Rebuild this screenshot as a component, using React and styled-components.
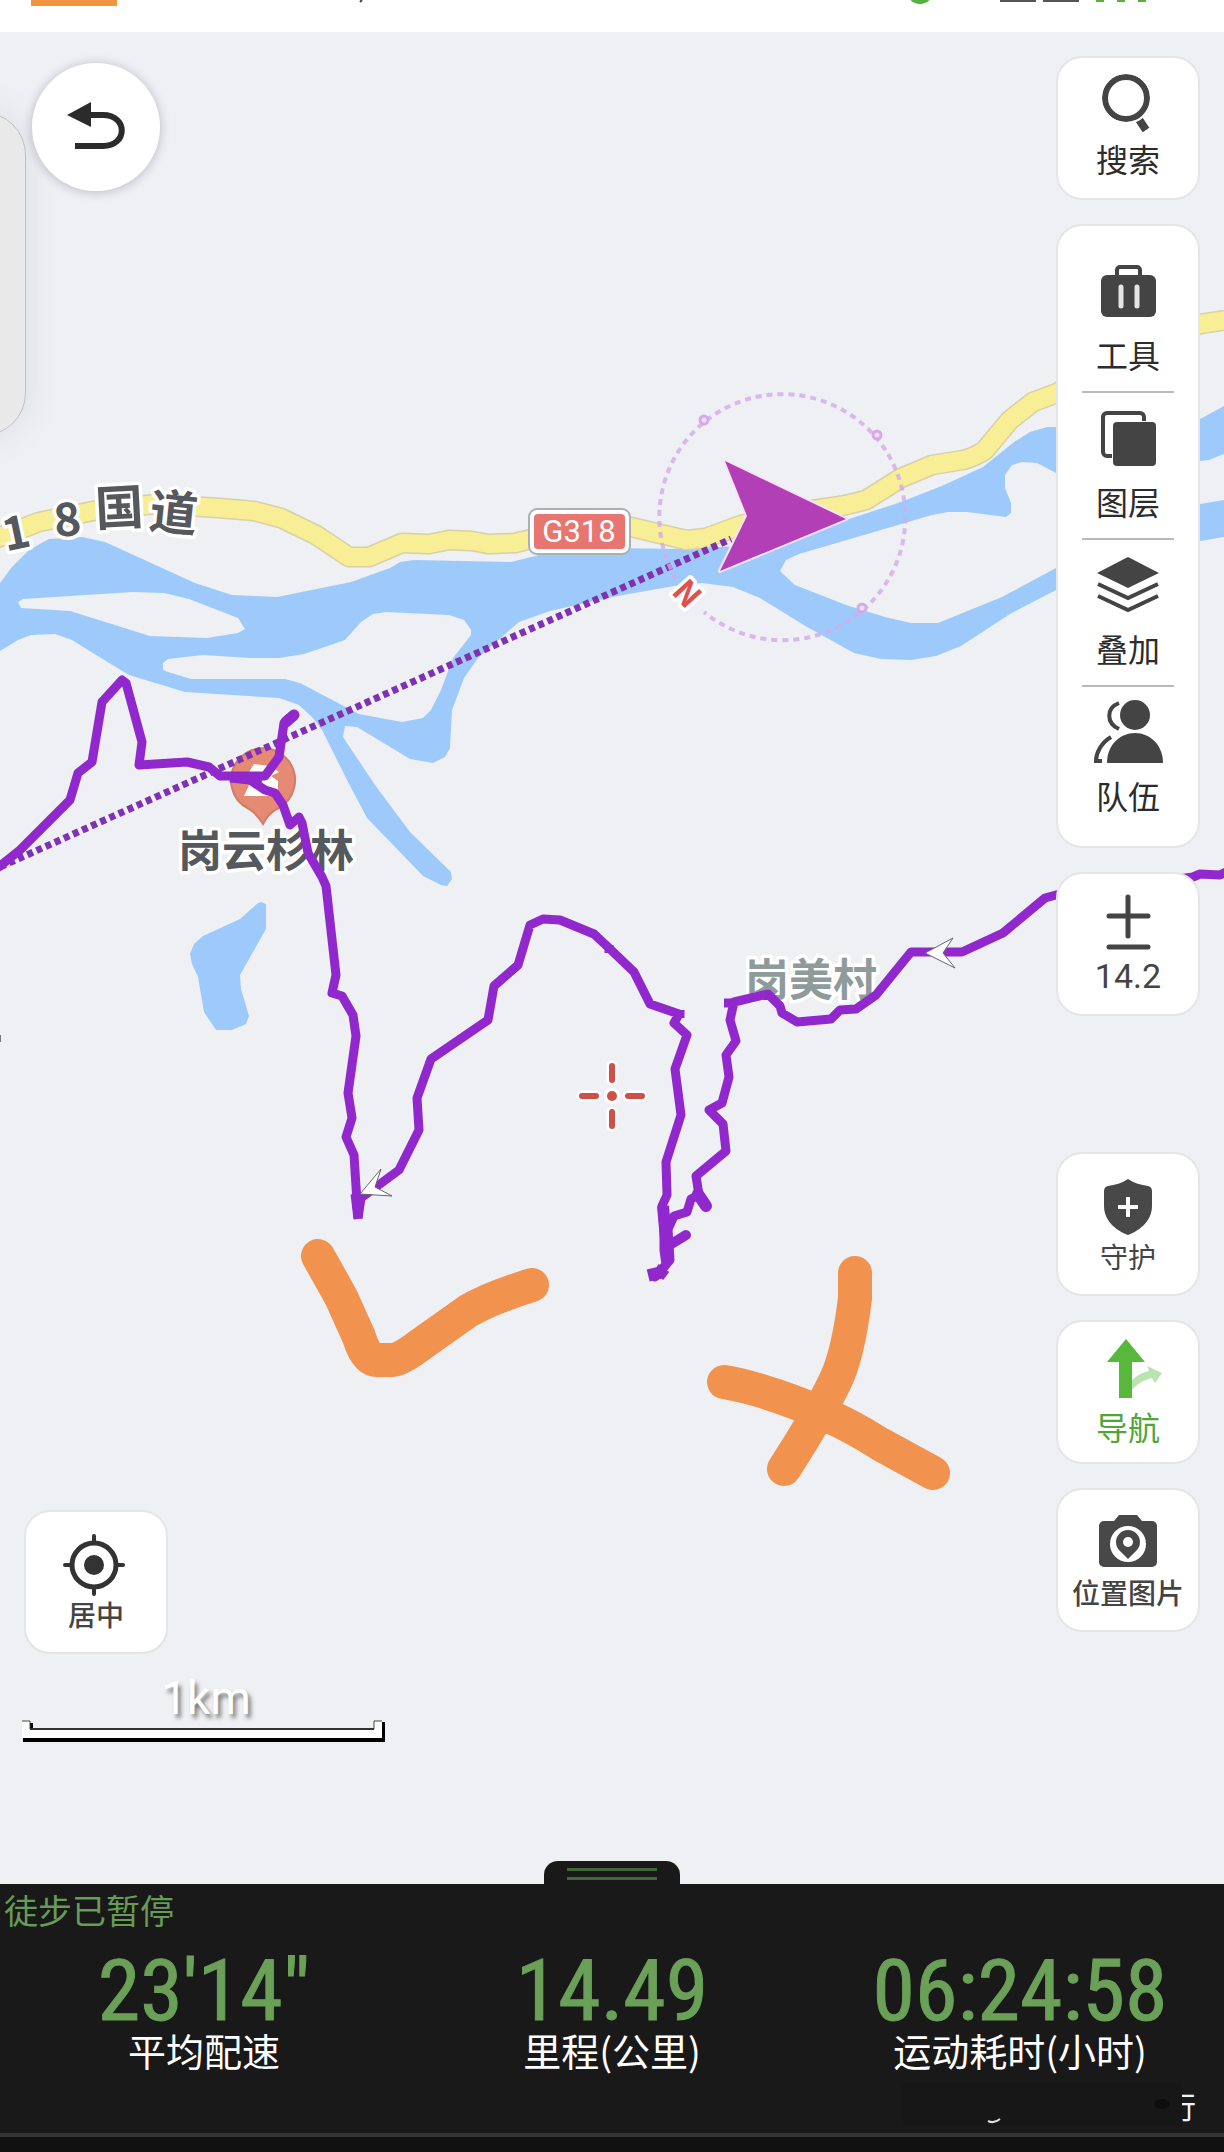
import React from 'react';
import styled, { createGlobalStyle } from 'styled-components';

const GlobalStyle = createGlobalStyle`
  *, *::before, *::after { box-sizing: border-box; }
  body {
    margin: 0;
    background: #eef0f4;
    font-family: "Noto Sans CJK SC", Roboto, sans-serif;
  }
  button { font: inherit; cursor: pointer; }
`;

const Page = styled.div`
  display: flex;
  flex-direction: column;
  min-height: 100vh;
  overflow: hidden;
`;

const StatusBar = styled.header`
  display: flex;
  justify-content: space-between;
  height: 32px;
  padding: 0 78px 0 31px;
  background: #fff;
`;

const StatusGroup = styled.div`
  display: flex;
  gap: 242px;
`;

const Tag = styled.span`
  width: 86px;
  height: 6px;
  background: #f0953f;
  border-bottom: 1px solid #c9a55a;
`;

const MapArea = styled.main`
  position: relative;
  display: flex;
  flex: 1;
  justify-content: space-between;
  padding: 24px 24px 0;
  background: #eef0f4;
`;

const MapCanvas = styled.svg`
  position: absolute;
  inset: 0;
  width: 100%;
  height: 100%;
  font-family: "Noto Sans CJK SC", sans-serif;
`;

const Drawer = styled.aside`
  position: absolute;
  left: -60px;
  top: 80px;
  width: 86px;
  height: 324px;
  border: 1px solid #bfc0c2;
  border-radius: 48px;
  background: #e9e9ea;
  box-shadow: 0 0 36px rgba(60, 60, 70, 0.1);
`;

const Column = styled.div`
  position: relative;
  display: flex;
  flex-direction: column;
  align-items: flex-start;
  gap: 24px;
`;

const LeftFoot = styled.div`
  display: flex;
  flex-direction: column;
  gap: 22px;
  margin-top: auto;
  padding-bottom: 140px;
`;

const RightFoot = styled.div`
  display: flex;
  flex-direction: column;
  gap: 24px;
  margin-top: 112px;
`;

const BackButton = styled.button`
  display: grid;
  place-items: center;
  width: 128px;
  height: 128px;
  margin: 7px 0 0 8px;
  padding: 0;
  border: 0;
  border-radius: 50%;
  background: #fff;
  box-shadow: 0 1px 8px 2px rgba(60, 50, 70, 0.2);
`;

const Card = styled.button`
  display: flex;
  flex-direction: column;
  align-items: center;
  width: 144px;
  height: 144px;
  padding: ${(p) => p.$top || 8}px 0 0;
  border: 2px solid #e5e5e7;
  border-radius: 26px;
  background: #fff;
`;

const ToolGroup = styled.nav`
  display: flex;
  flex-direction: column;
  align-items: center;
  width: 144px;
  padding: 20px 0 12px;
  border: 2px solid #e5e5e7;
  border-radius: 26px;
  background: #fff;
`;

const ToolItem = styled.button`
  display: flex;
  flex-direction: column;
  align-items: center;
  width: 92px;
  height: 147px;
  padding: 16px 0 0;
  border: 0;
  border-bottom: 2px solid #b9b9b9;
  background: none;
  &:last-child { border-bottom-color: transparent; }
`;

const Glyph = styled.svg`
  flex: none;
  width: 72px;
  height: 72px;
  overflow: visible;
`;

const Label = styled.span`
  color: ${(p) => p.$color || '#2c2c2c'};
  font-size: ${(p) => (p.$small ? 28 : 32)}px;
  font-weight: ${(p) => (p.$medium ? 500 : 400)};
  line-height: 40px;
  white-space: nowrap;
`;

const ZoomLevel = styled(Label)`
  font-family: Roboto, sans-serif;
  font-size: 34px;
  line-height: 44px;
`;

const Scale = styled.div`
  display: flex;
  flex-direction: column;
  align-items: center;
  width: 364px;
`;

const ScaleLabel = styled.span`
  color: #fff;
  font-family: Roboto, sans-serif;
  font-size: 46px;
  line-height: 44px;
  text-shadow: 3px 4px 4px #777;
`;

const Handle = styled.button`
  position: absolute;
  right: 0;
  bottom: 0;
  left: 0;
  display: flex;
  flex-direction: column;
  align-items: center;
  gap: 6px;
  width: 136px;
  height: 23px;
  margin: 0 auto;
  padding: 7px 0 0;
  border: 0;
  border-radius: 14px 14px 0 0;
  background: #191919;
`;

const Grip = styled.span`
  width: 90px;
  height: 3px;
  background: #41683a;
`;

const Panel = styled.section`
  display: flex;
  flex-direction: column;
  background: #191919;
`;

const PanelStatus = styled.p`
  margin: 0;
  padding: 6px 4px 0;
  color: #669c55;
  font-size: 34px;
  line-height: 40px;
`;

const Stats = styled.dl`
  display: grid;
  grid-template-columns: repeat(3, 1fr);
  margin: 21px 0 0;
`;

const Stat = styled.div`
  display: flex;
  flex-direction: column-reverse;
  align-items: center;
`;

const StatName = styled.dt`
  color: #fff;
  font-size: 38px;
  line-height: 38px;
`;

const StatValue = styled.dd`
  margin: 0;
  color: #6aa057;
  font-family: "Roboto Condensed", "Liberation Sans Narrow", Roboto, sans-serif;
  font-size: 86px;
  line-height: 80px;
  -webkit-text-stroke: 1px #6aa057;
`;

const Watermark = styled.div`
  display: flex;
  justify-content: flex-end;
  height: 64px;
  padding: 14px 28px 0 0;
`;

const WatermarkText = styled.span`
  display: flex;
  justify-content: flex-end;
  width: 14px;
  height: 44px;
  overflow: hidden;
  color: #f2f2f2;
  font-size: 30px;
  line-height: 44px;
`;

const BottomEdge = styled.footer`
  height: 19px;
  border-top: 4px solid #333;
  background: #111;
`;

const INK = '#444';
const TRACK = '#9128cd';

const SearchIcon = () => (
  <Glyph viewBox="0 0 72 72" fill="none" stroke={INK}>
    <circle cx="34" cy="32" r="21" strokeWidth="6" />
    <path d="M46 52l8 12" strokeWidth="8" />
    <circle cx="34" cy="32" r="25" stroke="#fff" strokeWidth="2" />
  </Glyph>
);

const ToolsIcon = () => (
  <Glyph viewBox="0 0 72 72" fill={INK}>
    <rect x="9" y="13" width="55" height="42" rx="6" />
    <path d="M25 14V8a3 3 0 0 1 3-3h17a3 3 0 0 1 3 3v6" fill="none" stroke={INK} strokeWidth="4" />
    <path d="M29 25v19M45 25v19" stroke="#e4e4e4" strokeWidth="5" strokeLinecap="round" />
  </Glyph>
);

const LayersIcon = () => (
  <Glyph viewBox="0 0 72 72" fill={INK}>
    <rect x="11" y="4" width="41" height="43" rx="4" fill="none" stroke={INK} strokeWidth="4" />
    <rect x="20" y="12" width="45" height="46" rx="5" fill="#fff" />
    <rect x="21" y="13" width="43" height="44" rx="4" />
  </Glyph>
);

const StackIcon = () => (
  <Glyph viewBox="0 0 72 72" fill={INK}>
    <path d="M36 1L67 17L36 32L5 17z" />
    <path d="M6 28l30 14L66 28M6 40l30 14L66 40" fill="none" stroke={INK} strokeWidth="4" />
  </Glyph>
);

const TeamIcon = () => (
  <Glyph viewBox="0 0 72 72" fill={INK}>
    <circle cx="43" cy="12" r="15" />
    <path d="M15 60C15 42 28 30 43 30s28 12 28 30z" />
    <path d="M27 0C14 5 14 20 27 26M19 34C9 40 4 50 4 58h6" fill="none" stroke={INK} strokeWidth="4" />
  </Glyph>
);

const PlusMinusIcon = () => (
  <Glyph viewBox="0 0 72 72" fill="none" stroke={INK} strokeWidth="5" strokeLinecap="round">
    <path d="M17 34h39M36 15v39M17 65h39" />
  </Glyph>
);

const ShieldIcon = () => (
  <Glyph viewBox="0 0 72 72" fill="#484848">
    <path d="M36 15C42 19 49 21 56 22c3 .5 4 3 4 5v15c0 14-11 24-24 29C23 66 12 56 12 42V27c0-3 2-4.500 4-5 7-1 14-3 20-7z" />
    <path d="M26 43h20M36 33v20" stroke="#fff" strokeWidth="4" />
  </Glyph>
);

const NavigateIcon = () => (
  <Glyph viewBox="0 0 72 72" fill="#57b83b">
    <path d="M34 5l19 23H40v36H27V28H15z" />
    <path d="M40 46c5-5 11-8 17-9l-2-5 15 7-7 10-3-5c-8 2-15 6-20 12z" fill="#b9e4b0" />
  </Glyph>
);

const CameraIcon = () => (
  <Glyph viewBox="0 0 72 72" fill="#484848">
    <path d="M12 21h10l5-6h18l5 6h10a5 5 0 0 1 5 5v36a5 5 0 0 1-5 5H12a5 5 0 0 1-5-5V26a5 5 0 0 1 5-5z" />
    <circle cx="36" cy="44" r="18" fill="#fff" />
    <path d="M36 59l-8-8a12 12 0 1 1 16 0z" />
    <circle cx="36" cy="42" r="5" fill="#fff" />
  </Glyph>
);

const CenterIcon = () => (
  <Glyph viewBox="0 0 72 72" fill="none" stroke="#333" strokeWidth="5" strokeLinecap="round">
    <circle cx="34" cy="43" r="22" />
    <circle cx="34" cy="43" r="10" fill="#333" stroke="none" />
    <path d="M34 14v6M34 66v6M5 43h6M57 43h6" strokeWidth="4" />
  </Glyph>
);

const BackIcon = () => (
  <svg width="64" height="56" viewBox="0 0 64 56">
    <path d="M26 16h13c25 0 25 31 0 31H11" fill="none" stroke="#2b2b2b" strokeWidth="6" />
    <path d="M3 16L27 3v25z" fill="#2b2b2b" />
  </svg>
);

const StatusIcons = () => (
  <svg width="240" height="12" viewBox="0 0 240 12" aria-hidden="true">
    <circle cx="14" cy="-9" r="11" fill="none" stroke="#55b13c" strokeWidth="4" />
    <path d="M94 1h36M137 1h36" stroke="#555" strokeWidth="2" />
    <path d="M190 1h8M211 1h8M232 1h8" stroke="#55b13c" strokeWidth="2" />
  </svg>
);

const ScaleRule = () => (
  <svg width="368" height="24" viewBox="0 0 368 24" aria-hidden="true">
    <path d="M1 3h10v7h341V2h11v20H1z" fill="#000" />
    <path d="M0 1h8v9h344V1h8v17H0z" fill="#fff" />
    <path d="M0 1h8v8h344V1h8" fill="none" stroke="#444" strokeWidth="1" />
    <path d="M9 9h343" stroke="#333" strokeWidth="2" />
  </svg>
);

const ROAD =
  'M-10 540L0 537L39 522L98 510L156 504L219 508L254 511L281 518L316 535L349 557L369 557L402 543L429 544L449 540L472 541L488 544L515 543L539 537L631 527L686 540L706 538L741 525L800 512L846 505L866 500L901 478L932 465L963 460Q975 457 985 450L1010 420L1033 402L1057 393L1130 350L1200 324L1234 319';

const RIVER =
  'M0 583L12 567L29 550L49 539L82 537L105 542L195 583L232 595L277 597L351 582L390 568L400 562L414 560L511 562L539 555L612 548L682 549L760 545L846 520L901 502L944 485L983 467L1014 442L1030 432L1047 427L1057 427L1130 440L1200 419L1224 406V454L1209 460L1200 461L1130 490L1056 473L1037 463L1022 462L1012 465L1005 475V488L1011 503V513L1006 517L967 512L948 512L932 515L799 554L786 560L780 571L795 585L846 605L885 617L911 623L938 623L1002 597L1056 568L1130 520L1200 504L1224 500V537L1200 541L1130 555L1056 590L1010 614L961 646L936 656L911 660L881 659L854 653L807 627L760 598L733 587L702 583L674 586L612 597L550 611L519 622L504 635L478 658L464 678L452 710L450 748L445 757L433 763L410 759L357 727L345 726L343 737L375 785L410 832L451 872L452 879L447 886L441 885L423 876L398 850L367 818L347 780L322 730L312 717L299 705L279 698L185 692L129 675L101 658L72 640L55 634L31 635L18 640L0 651Z' +
  'M18 602L23 599L133 592L164 593L189 599L238 618L245 629L238 633L207 638L150 636L70 611L21 608Z' +
  'M163 663L168 659L203 655L250 658L279 658L304 654L345 640L361 622L373 614L386 612L449 615L464 620L471 630L471 635L453 658L441 690L431 710L423 718L402 722L359 714L300 683L285 679L191 679L168 672L163 670Z';

const LAKE =
  'M258 903L261 902L266 904V929L240 975L241 989L249 1016L246 1024L232 1030H216L204 1012L198 977L192 964L190 954L194 944L203 936L240 919Z';

const TRACKS = [
  'M-6 870L0 866L20 850L70 800L78 773L92 762L102 702L122 680L126 683L142 742L139 765L187 762L209 767L220 776L265 776L279 757L284 723L288 719L293 716',
  'M230 778L250 780L265 790L275 793L283 805L290 825L299 817L302 823L308 853L322 877L326 886L336 975L332 993L342 996L353 1015L356 1036L348 1093L352 1118L346 1137L354 1155L358 1218',
  'M358 1218L361 1198L399 1170L419 1130L417 1098L431 1059L488 1020L494 986L518 965L530 925L543 919L560 920L594 934L609 948L634 972L650 1004L679 1014L674 1023L687 1035L675 1069L681 1115L666 1162L667 1195L662 1206L664 1229L664 1250L666 1265L655 1277L670 1260L668 1229L674 1216L687 1212L691 1199L699 1195L696 1176L726 1151L723 1124L709 1110L722 1103L729 1077L726 1055L736 1041L730 1020L734 1002L768 994L780 1006L782 1013L797 1022L831 1019L840 1010L856 1009L876 995L911 952L962 952L1003 933L1045 898L1056 895L1193 877L1200 874L1220 875L1230 870',
];

const Halo = styled.text`
  fill: ${(p) => p.$color || '#55585c'};
  stroke: #fff;
  stroke-width: 7px;
  stroke-linejoin: round;
  paint-order: stroke;
  font-size: ${(p) => p.$size || 44}px;
  font-weight: 700;
  text-anchor: middle;
  dominant-baseline: central;
`;

const MapDrawing = () => (
  <MapCanvas viewBox="0 32 1224 1852" preserveAspectRatio="xMidYMid slice" role="img" aria-label="地图">
    <path d={RIVER} fill="#9ecafb" fillRule="evenodd" />
    <path d={LAKE} fill="#9ecafb" />
    <g fill="none" strokeLinejoin="round">
      <path d={ROAD} stroke="#d8d0a6" strokeWidth="21" />
      <path d={ROAD} stroke="#f8ee96" strokeWidth="18" />
    </g>

    <Halo $size={46} transform="translate(15 529) rotate(-12)">1</Halo>
    <Halo $size={46} transform="translate(67 516) rotate(-6)">8</Halo>
    <Halo $size={48} transform="translate(119 504) rotate(-3)">国</Halo>
    <Halo $size={48} transform="translate(174 509) rotate(6)">道</Halo>

    <rect x="529" y="509" width="101" height="45" rx="8" fill="#fff" stroke="#aab0b4" strokeWidth="2" />
    <rect x="534" y="514" width="91" height="35" rx="4" fill="#e77671" />
    <text x="579" y="542" fill="#fff" fontSize="31" fontFamily="Roboto, sans-serif" textAnchor="middle">G318</text>

    <path d="M263 824Q257 814 249 809A32 32 0 1 1 277 809Q268 814 263 824z" fill="#e58b74" stroke="#cf7c68" strokeWidth="2" />
    <path d="M254 764l16 2 9 6-8 4 7 5v15h-34l6-13-4-6z" fill="#fff" />
    <Halo x="266" y="848">岗云杉林</Halo>
    <Halo x="811" y="977" $color="#8f9b9b">岗美村</Halo>
    <path d="M0 1035v7" stroke="#777" strokeWidth="2" />

    <path d="M0 867L731 539" stroke="#8031b3" strokeWidth="7" strokeDasharray="6 4" />
    <g fill="none" stroke={TRACK} strokeWidth="9" strokeLinejoin="round">
      {TRACKS.map((d) => <path key={d} d={d} />)}
      <path d="M286 722L294 715" strokeLinecap="round" strokeWidth="11" />
      <path d="M232 777L262 778M724 1003h12M609 945v8M680 1010v8" />
      <path d="M698 1194L706 1206" strokeWidth="12" strokeLinecap="round" />
      <path d="M663 1206L668 1262" strokeWidth="12" />
      <path d="M668 1246L686 1235" strokeWidth="10" strokeLinecap="round" />
      <path d="M653 1268l3 12M658 1276l6 -8" strokeWidth="13" />
      <path d="M355 1194l3 25" />
    </g>
    <g fill="#fff" stroke="#666" strokeWidth="1">
      <path d="M925 953L953 938L943 953L955 968z" />
      <path d="M360 1194L381 1169L375 1187L392 1196z" />
    </g>

    <g fill="none" stroke="#d5a9ea">
      <path d="M676 579A123 123 0 1 1 704 612" strokeWidth="4" strokeDasharray="6 5" opacity="0.8" />
      <g strokeWidth="3" fill="#eedcf7">
        <circle cx="704" cy="420" r="4" />
        <circle cx="877" cy="435" r="4" />
        <circle cx="862" cy="608" r="4" />
      </g>
    </g>
    <Halo $size={32} $color="#e0504f" transform="translate(689 592) rotate(48)">N</Halo>
    <path d="M725 461L846 519L720 571L747 516z" fill="#b33fb7" stroke="#f9e3f8" strokeWidth="4" strokeLinejoin="round" paintOrder="stroke" />

    <g strokeLinecap="round" fill="none">
      <path d="M582 1096h14M628 1096h14M612 1066v14M612 1112v14" stroke="#fff" strokeWidth="11" />
      <circle cx="612" cy="1096" r="8" fill="#fff" />
      <path d="M582 1096h14M628 1096h14M612 1066v14M612 1112v14" stroke="#cf5048" strokeWidth="6" />
      <circle cx="612" cy="1096" r="5" fill="#cf5048" />
    </g>

    <g fill="none" stroke="#f1924e" strokeWidth="34" strokeLinecap="round" strokeLinejoin="round">
      <path d="M318 1256L341 1297L359 1337Q366 1360 377 1360H393Q400 1360 420 1345L468 1311Q490 1298 532 1285" />
      <path d="M855 1273V1298Q850 1340 841 1367T784 1469" />
      <path d="M724 1382Q766 1389 826 1415Q850 1425 880 1444L933 1473" />
    </g>
  </MapCanvas>
);

const tools = [
  ['工具', ToolsIcon],
  ['图层', LayersIcon],
  ['叠加', StackIcon],
  ['队伍', TeamIcon],
];

const stats = [
  ['平均配速', '23\'14"'],
  ['里程(公里)', '14.49'],
  ['运动耗时(小时)', '06:24:58'],
];

export default function App() {
  return (
    <Page>
      <GlobalStyle />
      <StatusBar>
        <StatusGroup>
          <Tag />
          <svg width="6" height="4" viewBox="0 0 6 4" aria-hidden="true">
            <path d="M3 0L1 2" stroke="#444" strokeWidth="2" />
          </svg>
        </StatusGroup>
        <StatusIcons />
      </StatusBar>

      <MapArea>
        <MapDrawing />
        <Drawer />
        <Column>
          <BackButton aria-label="返回"><BackIcon /></BackButton>
          <LeftFoot>
            <Card $top={10}>
              <CenterIcon />
              <Label $small $medium $color="#444">居中</Label>
            </Card>
            <Scale>
              <ScaleLabel>1km</ScaleLabel>
              <ScaleRule />
            </Scale>
          </LeftFoot>
        </Column>

        <Column>
          <Card>
            <SearchIcon />
            <Label>搜索</Label>
          </Card>
          <ToolGroup>
            {tools.map(([name, Icon]) => (
              <ToolItem key={name}>
                <Icon />
                <Label>{name}</Label>
              </ToolItem>
            ))}
          </ToolGroup>
          <Card>
            <PlusMinusIcon />
            <ZoomLevel $color="#444">14.2</ZoomLevel>
          </Card>
          <RightFoot>
            <Card $top={10}>
              <ShieldIcon />
              <Label $small $color="#444">守护</Label>
            </Card>
            <Card $top={12}>
              <NavigateIcon />
              <Label $color="#4fa63a">导航</Label>
            </Card>
            <Card $top={10}>
              <CameraIcon />
              <Label $small $medium $color="#444">位置图片</Label>
            </Card>
          </RightFoot>
        </Column>

        <Handle aria-label="展开面板">
          <Grip />
          <Grip />
        </Handle>
      </MapArea>

      <Panel>
        <PanelStatus>徒步已暂停</PanelStatus>
        <Stats>
          {stats.map(([name, value]) => (
            <Stat key={name}>
              <StatName>{name}</StatName>
              <StatValue>{value}</StatValue>
            </Stat>
          ))}
        </Stats>
        <Watermark>
          <svg width="280" height="44" viewBox="0 0 280 44" aria-hidden="true">
            <rect width="280" height="44" fill="#171717" />
            <path d="M86 38q6 3 12-2" fill="none" stroke="#ddd" strokeWidth="2" />
            <ellipse cx="260" cy="21" rx="8" ry="5" fill="#0e0e0e" />
          </svg>
          <WatermarkText>行</WatermarkText>
        </Watermark>
        <BottomEdge />
      </Panel>
    </Page>
  );
}
